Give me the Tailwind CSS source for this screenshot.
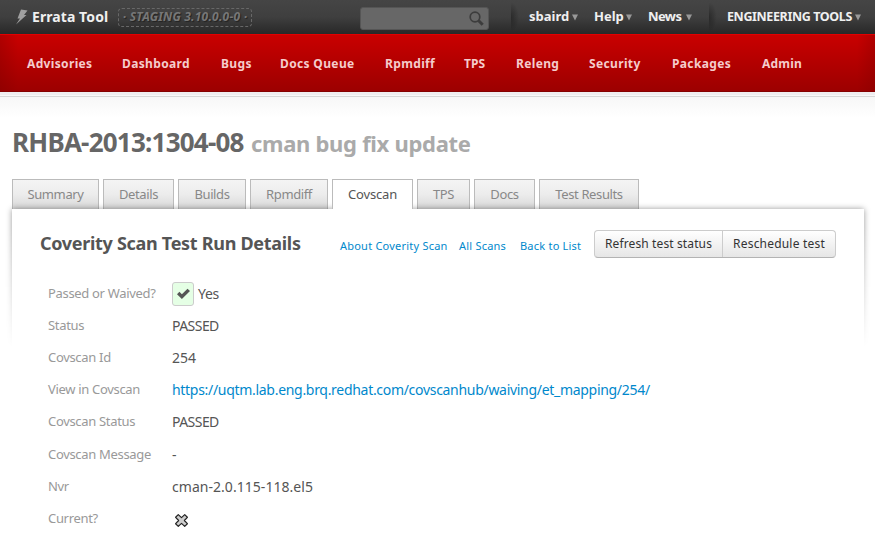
<!DOCTYPE html>
<html lang="en">
<head>
<meta charset="utf-8">
<title>Errata Tool</title>
<script src="https://cdn.jsdelivr.net/npm/@tailwindcss/browser@4"></script>
</head>
<body class="h-[543px] w-[875px] overflow-hidden bg-white font-['Noto_Sans','Open_Sans',sans-serif] text-[#555]">
<header class="flex h-[34px] items-center bg-linear-to-b from-[#454545] via-[#3f3f3f] to-[#282828] text-[13px] font-bold text-[#f0f0f0]">
  <svg class="ml-[15px] h-4 w-[13px] shrink-0" viewBox="0 0 13 16"><path d="M6 0.5 12.5 1.5 9 6H11.5L1 15.5 5 9.5H2.5Z" fill="#a0a0a0"/></svg>
  <span class="ml-1 w-[76px] pb-0.5 whitespace-nowrap text-[14px] tracking-[.08px]">Errata Tool</span>
  <span class="ml-[10px] flex h-[19px] w-[134px] items-center justify-center whitespace-nowrap rounded border border-dashed border-[#686868] text-[12px] tracking-[.22px] italic text-[#777] text-shadow-[1px_1px_1px_#222]">· STAGING 3.10.0.0-0 ·</span>
  <div class="ml-[108px] mt-[3px] flex h-[23px] w-[129px] items-center justify-end rounded-[3px] border border-[#555] bg-[#676767] pr-1">
    <svg class="size-[15px]" viewBox="0 0 15 15" fill="none" stroke="#3c3c3c"><circle cx="6" cy="6" r="4.8" stroke-width="1.7"/><path d="m9.7 9.7 4 4" stroke-width="3"/></svg>
  </div>
  <div class="ml-[22px] h-[30px] w-[18px] bg-[radial-gradient(ellipse_8px_15px_at_left,rgba(0,0,0,.32),transparent)]"></div>
  <span class="flex w-[65px] items-center justify-between pr-4 whitespace-nowrap">sbaird<svg class="h-[7px] w-[6px]" viewBox="0 0 6 7"><path d="M0 .5H6L3 6.5Z" fill="#999"/></svg></span>
  <span class="flex w-[54px] items-center justify-between pr-4 whitespace-nowrap">Help<svg class="h-[7px] w-[6px]" viewBox="0 0 6 7"><path d="M0 .5H6L3 6.5Z" fill="#999"/></svg></span>
  <span class="flex w-[61px] items-center justify-between pr-[17px] tracking-[-.6px] whitespace-nowrap">News<svg class="h-[7px] w-[6px]" viewBox="0 0 6 7"><path d="M0 .5H6L3 6.5Z" fill="#999"/></svg></span>
  <div class="h-[30px] w-[18px] bg-[radial-gradient(ellipse_8px_15px_at_left,rgba(0,0,0,.32),transparent)]"></div>
  <span class="flex w-[134px] items-center justify-between whitespace-nowrap text-[12.5px] tracking-[-.38px]">ENGINEERING TOOLS<svg class="h-[7px] w-[6px]" viewBox="0 0 6 7"><path d="M0 .5H6L3 6.5Z" fill="#999"/></svg></span>
</header>
<nav class="flex h-[58px] items-center border-t border-b border-t-[#e20000] border-b-[#850000] bg-[linear-gradient(to_right,rgba(120,0,0,.3),transparent_18px,transparent_857px,rgba(120,0,0,.3)),linear-gradient(#c90000,#9c0000)] pt-px pl-[27px] text-[12px] font-bold tracking-[.35px] whitespace-nowrap text-[#f5cccc]">
  <a class="w-[95px]">Advisories</a><a class="w-[99px]">Dashboard</a><a class="w-[59px]">Bugs</a><a class="w-[105px]">Docs Queue</a><a class="w-[79px]">Rpmdiff</a><a class="w-[52px] tracking-normal">TPS</a><a class="w-[73px]">Releng</a><a class="w-[83px]">Security</a><a class="w-[90px]">Packages</a><a class="tracking-[.2px]">Admin</a>
</nav>
<div class="h-1 border-b border-[#f8f8f8] bg-[#efedef]"></div>
<div class="h-[22px] border-t border-[#d8d8d8] bg-linear-to-b from-[#f7f7f7] to-white"></div>
<main class="px-3">
  <h1 class="mt-[5px] flex h-10 items-baseline whitespace-nowrap font-bold text-[#666]"><span class="w-[239px] text-[26px] tracking-[-.78px]">RHBA-2013:1304-08</span><span class="text-[22px] tracking-[-.3px] text-[#aaa]">cman bug fix update</span></h1>
  <div class="mt-4 flex h-[30px] gap-1 text-[13px] tracking-[-.38px] text-[#888] [&>a]:border [&>a]:border-b-0 [&>a]:border-[#bbb] [&>a]:pt-[5px] [&>a]:text-center">
    <a class="w-[87px] bg-linear-to-b from-[#f4f4f4] via-[#ececec] to-[#d8d8d8]">Summary</a>
    <a class="w-[71px] bg-linear-to-b from-[#f4f4f4] via-[#ececec] to-[#d8d8d8]">Details</a>
    <a class="w-[68px] bg-linear-to-b from-[#f4f4f4] via-[#ececec] to-[#d8d8d8]">Builds</a>
    <a class="w-[78px] bg-linear-to-b from-[#f4f4f4] via-[#ececec] to-[#d8d8d8]">Rpmdiff</a>
    <a class="relative z-10 w-[81px] bg-white tracking-[-.15px] text-[#555]">Covscan</a>
    <a class="w-[53px] bg-linear-to-b from-[#f4f4f4] via-[#ececec] to-[#d8d8d8]">TPS</a>
    <a class="w-[61px] bg-linear-to-b from-[#f4f4f4] via-[#ececec] to-[#d8d8d8]">Docs</a>
    <a class="w-[100px] bg-linear-to-b from-[#f4f4f4] via-[#ececec] to-[#d8d8d8]">Test Results</a>
  </div>
  <section class="relative h-[334px] w-[852px] px-7 pt-[21px]">
    <!-- panel shadow that fades out downwards -->
    <div class="absolute -top-3 -left-3 h-[150px] w-[875px] overflow-hidden px-3 pt-3 [mask-image:linear-gradient(to_bottom,black_20%,transparent)]"><div class="h-[300px] w-[852px] bg-white shadow-[0_0_6px_rgba(0,0,0,.4)]"></div></div>
    <div class="relative flex h-7 items-center whitespace-nowrap">
      <h2 class="w-[300px] pb-px text-[18px] font-bold tracking-[-.3px]">Coverity Scan Test Run Details</h2>
      <div class="flex pt-[5px] text-[11px] tracking-[.22px] text-[#0088cc]"><a class="w-[119px]">About Coverity Scan</a><a class="w-[61px]">All Scans</a><a class="w-[74px]">Back to List</a></div>
      <div class="flex h-7 w-[242px] rounded border border-[#ccc] border-b-[#b3b3b3] bg-linear-to-b from-white to-[#e6e6e6] text-[12px] leading-[26px] tracking-[.12px] text-[#333]"><span class="w-[128px] border-r border-[#ccc] text-center">Refresh test status</span><span class="w-[112px] text-center tracking-[.2px]">Reschedule test</span></div>
    </div>
    <dl class="relative mt-5 grid grid-cols-[124px_1fr] grid-rows-[32px_32px_32px_32px_32px_33px_32px_32px] items-center pl-2 text-[14px] [&>dt]:text-[13px] [&>dt]:tracking-[-.32px] [&>dt]:text-[#999]">
      <dt>Passed or Waived?</dt><dd class="flex items-center gap-1 tracking-[-.3px]"><span class="flex h-6 w-[22px] items-center justify-center rounded-[3px] border border-[#ccc] bg-[#e5ffe5]"><svg class="h-3 w-[13px]" viewBox="0 0 13 12"><path d="m0 6.2 2.4-2.4 2.5 2.4L10.5.7 13 3.1 4.9 11Z" fill="#555"/></svg></span><span class="pb-0.5">Yes</span></dd>
      <dt>Status</dt><dd class="pb-0.5 tracking-[-.55px]">PASSED</dd>
      <dt>Covscan Id</dt><dd class="pb-0.5">254</dd>
      <dt>View in Covscan</dt><dd class="pb-0.5 tracking-[-.3px] text-[#0088cc]">https://uqtm.lab.eng.brq.redhat.com/covscanhub/waiving/et_mapping/254/</dd>
      <dt>Covscan Status</dt><dd class="pb-0.5 tracking-[-.55px]">PASSED</dd>
      <dt>Covscan Message</dt><dd>-</dd>
      <dt>Nvr</dt><dd class="pb-0.5 tracking-[.04px]">cman-2.0.115-118.el5</dd>
      <dt>Current?</dt><dd class="pt-[3px]"><svg class="ml-[2px] size-[15px]" viewBox="0 0 14 14"><path d="M4 1.5 7 4.3 10 1.5 12.5 4 9.7 7 12.5 10 10 12.5 7 9.7 4 12.5 1.5 10 4.3 7 1.5 4Z" fill="#ccc" stroke="#222" stroke-width="1.1" stroke-linejoin="round"/></svg></dd>
    </dl>
  </section>
</main>
</body>
</html>
